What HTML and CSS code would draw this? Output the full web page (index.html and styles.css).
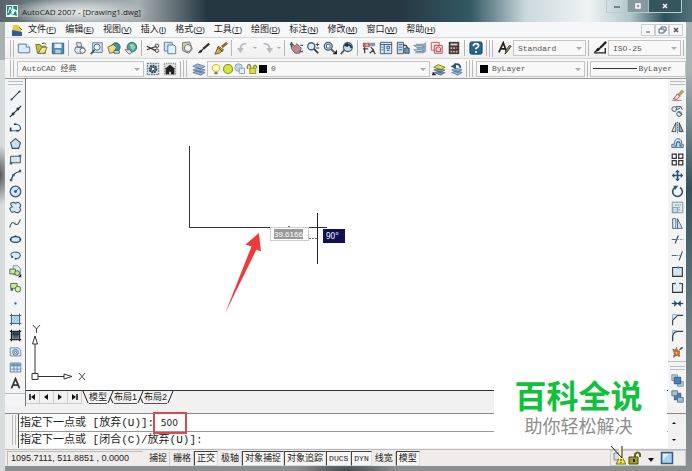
FILE: index.html
```html
<!DOCTYPE html>
<html lang="zh-CN">
<head>
<meta charset="utf-8">
<title>AutoCAD 2007 - [Drawing1.dwg]</title>
<link rel="stylesheet" href="styles.css">
</head>
<body>
<svg class="sprite" aria-hidden="true">
<symbol id="new" viewBox="0 0 16 16"><path d="M1.500 3.500h9l4 3.500v6.500h-13z" fill="#dcebf5" stroke="#4d7390"/><path d="M10.500 3.500v3.500h4" fill="#fff" stroke="#4d7390"/></symbol>
<symbol id="open" viewBox="0 0 16 16"><path d="M2 4h5l1 2h5v8H4z" fill="#c9bd45" stroke="#6d6a2c"/><path d="M5 14l4-7h6l-3 7z" fill="#f4e98a" stroke="#6d6a2c"/><path d="M9 3q3-2 5 1" fill="none" stroke="#333"/></symbol>
<symbol id="save" viewBox="0 0 16 16"><path d="M1.500 2.500h13v12h-13z" fill="#4f8fb9" stroke="#2c5878"/><path d="M4 3h8v5H4z" fill="#e6f1f7"/><path d="M5 10h6v4H5z" fill="#b5cfdf"/></symbol>
<symbol id="print" viewBox="0 0 16 16"><path d="M4 2h5l1 5H5zM3 7h9l2 4-3 3H4l-2-3z" fill="#e3e8ee" stroke="#536170"/><circle cx="11" cy="11" r="3" fill="#fff" stroke="#456"/></symbol>
<symbol id="preview" viewBox="0 0 16 16"><path d="M3 2h11v11H3z" fill="#d7e8f2" stroke="#54758b"/><circle cx="8" cy="7" r="3.500" fill="#eef8ff" stroke="#39566e"/><path d="M5 10l-4 5" stroke="#39566e" stroke-width="2"/></symbol>
<symbol id="publish" viewBox="0 0 16 16"><circle cx="10" cy="7" r="5" fill="#3e93a1" stroke="#285a67"/><path d="M1 7l6-3 4 3-3 6-5 1z" fill="#e9e084" stroke="#65653b"/><path d="M8 11h6v3H8z" fill="#dde6ed" stroke="#555"/></symbol>
<symbol id="globe" viewBox="0 0 16 16"><circle cx="9" cy="7" r="5.500" fill="#4a9fa9" stroke="#2e646f"/><path d="M6 4l4-1 3 4-3 4-2-3z" fill="#9dd39d"/><path d="M1 10h6l2 3-3 2z" fill="#dfe7ee" stroke="#567"/></symbol>
<symbol id="cut" viewBox="0 0 16 16"><path d="M1 6l10 5M1 10l11-4" stroke="#333" stroke-width="1.400"/><circle cx="12.500" cy="5.500" r="2" fill="none" stroke="#333"/><circle cx="12.500" cy="11" r="2" fill="none" stroke="#333"/></symbol>
<symbol id="copy" viewBox="0 0 16 16"><path d="M1.500 1.500h9v10h-9z" fill="#cfe3ef" stroke="#4d7894"/><path d="M5.500 4.500h7l2 2v8h-9z" fill="#e5f1f8" stroke="#4d7894"/></symbol>
<symbol id="paste" viewBox="0 0 16 16"><path d="M3 2l8-1 3 8-4 5-7-3z" fill="#d9d1aa" stroke="#666"/><circle cx="9" cy="8" r="4" fill="#eef2f4" stroke="#667"/></symbol>
<symbol id="brush" viewBox="0 0 16 16"><path d="M14 3L7 9" stroke="#333" stroke-width="2.500"/><path d="M8 8L5 13l-4 1 2-3z" fill="#222"/></symbol>
<symbol id="match" viewBox="0 0 16 16"><path d="M15 2L9 7" stroke="#8b6e32" stroke-width="3"/><path d="M5 6l6 4-5 4-5 1z" fill="#d3ad4b" stroke="#6c5420"/><path d="M4 7l6 5" stroke="#333"/></symbol>
<symbol id="undo" viewBox="0 0 16 16"><path d="M12 3Q5 3 5 9" fill="none" stroke="#b9bdc0" stroke-width="2"/><path d="M1 8h8l-4 6z" fill="#b9bdc0"/></symbol>
<symbol id="redo" viewBox="0 0 16 16"><path d="M4 3q7 0 7 6" fill="none" stroke="#b9bdc0" stroke-width="2"/><path d="M7 8h8l-4 6z" fill="#b9bdc0"/></symbol>
<symbol id="pan" viewBox="0 0 16 16"><path d="M2 2l5 4 2-3 5 5-2 6H7L3 9z" fill="#c08a8a" stroke="#79525a"/><path d="M1 4h4M3 1v6M12 12h4M13 5h3" stroke="#367" stroke-width="1.500"/></symbol>
<symbol id="zoom" viewBox="0 0 16 16"><circle cx="6" cy="6" r="4" fill="#dceefa" stroke="#40617c" stroke-width="1.500"/><path d="M9 9l5 5" stroke="#333" stroke-width="2"/><path d="M11 4h4M13 2v4M11 8h4" stroke="#333"/></symbol>
<symbol id="zoomwin" viewBox="0 0 16 16"><circle cx="6" cy="6" r="4.500" fill="#c6dff0" stroke="#40617c" stroke-width="1.500"/><path d="M4 4h4v4H4z" fill="#fff" stroke="#557"/><path d="M9 9l4 4" stroke="#456" stroke-width="2"/><path d="M11 15h5v-5z" fill="#222"/></symbol>
<symbol id="zoomprev" viewBox="0 0 16 16"><circle cx="9" cy="7" r="5" fill="#c6dff0" stroke="#40617c" stroke-width="1.500"/><path d="M5 10l-4 5" stroke="#456" stroke-width="2"/><path d="M13 8q-1-5-6-3" fill="none" stroke="#234" stroke-width="2"/><path d="M4 5l5-4v6z" fill="#234"/></symbol>
<symbol id="props" viewBox="0 0 16 16"><path d="M1 2h8v5H1z" fill="#be5574"/><path d="M9 2h6v4H9z" fill="#779db4"/><path d="M3 7v7M1 9h6M10 7l3 3-4 4M12 9l3 6" stroke="#444" stroke-width="1.500" fill="none"/><path d="M4 3h3v3H4z" fill="#e6bd53"/></symbol>
<symbol id="dc" viewBox="0 0 16 16"><path d="M1.500 1.500h13v13h-13z" fill="#d8e8f1" stroke="#33546c"/><path d="M1 4h14M6 4v10M3 7h2M3 10h2M9 6h3v3H9zM9 11h3" stroke="#33546c" fill="none"/></symbol>
<symbol id="palette" viewBox="0 0 16 16"><path d="M1.500 1.500h7v13h-7z" fill="#c9deeb" stroke="#33546c"/><path d="M3 4h4M3 7h4M3 10h4" stroke="#33546c"/><path d="M8 5q5-1 5 4" fill="none" stroke="#335" stroke-width="1.500"/><path d="M10 8h5v6h-5z" fill="#719ab8" stroke="#246"/></symbol>
<symbol id="sheet" viewBox="0 0 16 16"><path d="M3 3h9l3-2v11l-3 2H1l4-3z" fill="#91aab7"/><path d="M1 5h9l3 2H4zM1 10h9l3 2H4z" fill="#d8e7ed" stroke="#6e8997"/></symbol>
<symbol id="markup" viewBox="0 0 16 16"><path d="M1.500 1.500h9v9h-9z" fill="#f7dfe1" stroke="#be4f59"/><path d="M5 5h9v9H5z" fill="#f4d6d9" stroke="#b64550"/><path d="M7 8q3-3 5 0v4H7z" fill="none" stroke="#b64550"/></symbol>
<symbol id="calc" viewBox="0 0 16 16"><path d="M2 1h12v14H2z" fill="#443939"/><path d="M4 3h8v2H4z" fill="#ddd"/><path d="M4 7h2v2H4zM7 7h2v2H7zM4 11h2v2H4zM7 11h2v2H7zM10 11h2v2h-2z" fill="#c9b3ac"/><path d="M10 7h2v2h-2z" fill="#d44"/></symbol>
<symbol id="help" viewBox="0 0 16 16"><rect x="1" y="1" width="14" height="14" rx="2" fill="#286486" stroke="#183f58"/><path d="M5 6q0-3 3-3t3 2.500q0 1.500-3 3v1" stroke="#fff" stroke-width="2" fill="none"/><circle cx="8" cy="12.500" r="1.200" fill="#fff"/></symbol>
<symbol id="tstyle" viewBox="0 0 16 16"><path d="M1 13L6 2l4 11M3 9h6" fill="none" stroke="#222" stroke-width="2"/><path d="M15 6l-5 7-2 2 1-4 4-6z" fill="#a29366" stroke="#333"/></symbol>
<symbol id="dstyle" viewBox="0 0 16 16"><path d="M15 1L8 8" stroke="#222" stroke-width="2.500"/><path d="M9 7l-2 4-6 2 4-5z" fill="#222"/><path d="M1 13.500h14M14 8v6" stroke="#222" stroke-width="1.500"/></symbol>
<symbol id="gear" viewBox="0 0 16 16"><path d="M1.500 1.500h13v13h-13z" fill="#d4e0e8" stroke="#435766" stroke-dasharray="2 1"/><circle cx="8" cy="8" r="4" fill="#7193a9" stroke="#2c4659" stroke-width="2" stroke-dasharray="2 1"/><circle cx="8" cy="8" r="2" fill="#fff" stroke="#2c4659"/></symbol>
<symbol id="home" viewBox="0 0 16 16"><path d="M1.500 1.500h13v13h-13z" fill="#ddd" stroke="#666" stroke-dasharray="1 1"/><path d="M2 8l6-5 6 5h-1v6H9v-3H7v3H3V8z" fill="#222"/></symbol>
<symbol id="layers" viewBox="0 0 16 16"><path d="M1 9l5-2 9 2-5 3zM1 12l5-2 9 2-5 3zM1 5l5-3 9 3-5 3z" fill="#91b2ce" stroke="#426480" stroke-width=".7"/></symbol>
<symbol id="bulb" viewBox="0 0 16 16"><path d="M5 11q-3-3-2-6 1-3 5-3t5 3q1 3-2 6z" fill="#ffffa5" stroke="#a6a32a"/><path d="M6 12h4v3H6z" fill="#777"/></symbol>
<symbol id="sun" viewBox="0 0 16 16"><circle cx="8" cy="8" r="6" fill="#d7e534" stroke="#838e24" stroke-width="1.500"/></symbol>
<symbol id="vpfreeze" viewBox="0 0 16 16"><circle cx="6" cy="6" r="5" fill="#c5d6df" stroke="#7893a1"/><path d="M7 7h7v7H7z" fill="#e5edf2" stroke="#7893a1"/></symbol>
<symbol id="unlock" viewBox="0 0 16 16"><path d="M2 8V4q2-4 4 0v4M10 8V5q2-4 4 0v2" fill="none" stroke="#8b931b" stroke-width="2"/><path d="M5 7h8v7H5z" fill="#dfe233" stroke="#777b1d"/></symbol>
<symbol id="laycur" viewBox="0 0 16 16"><path d="M2 6l5-3 8 3-5 3z" fill="#e0d947" stroke="#7b7d2a"/><path d="M2 9l5-1 8 1-5 3zM2 12l5-1 8 1-5 3z" fill="#7792a7" stroke="#455f74" stroke-width=".7"/><path d="M0 15h5l-4-4z" fill="#222"/></symbol>
<symbol id="layprev" viewBox="0 0 16 16"><path d="M3 9l5-2 7 2-5 3zM3 12l5-2 7 2-5 3z" fill="#91b2ce" stroke="#426480" stroke-width=".7"/><path d="M13 7q0-6-7-4" fill="none" stroke="#2c5275" stroke-width="2"/><path d="M2 5l6-4v7z" fill="#2c5275"/></symbol>
<symbol id="line" viewBox="0 0 16 16"><path d="M3 13L13 3" stroke="#444" stroke-width="1.300"/><circle cx="3" cy="13" r="1.300" fill="#247"/><circle cx="13" cy="3" r="1.300" fill="#247"/></symbol>
<symbol id="xline" viewBox="0 0 16 16"><path d="M1 15L15 1" stroke="#333" stroke-width="1.500"/><circle cx="5" cy="11" r="1.800" fill="#234"/><circle cx="11" cy="5" r="1.800" fill="#234"/></symbol>
<symbol id="pline" viewBox="0 0 16 16"><path d="M2 12h9q4-1 3-4-1-4-6-4" fill="none" stroke="#346b91" stroke-width="1.500"/><path d="M1 8h2v5H1zM9 11h3v2H9zM6 3h3v2H6z" fill="#234"/></symbol>
<symbol id="polygon" viewBox="0 0 16 16"><path d="M8 2l6 5-2 7H4L2 7z" fill="#cde1ed" stroke="#34485a" stroke-width="1.300"/></symbol>
<symbol id="rect" viewBox="0 0 16 16"><path d="M2 4h12v8H2z" fill="#d5e5ee" stroke="#333"/><path d="M1 11h3v3H1zM12 2h3v3h-3z" fill="#2a6389"/></symbol>
<symbol id="arc" viewBox="0 0 16 16"><path d="M3 14Q4 4 14 3" fill="none" stroke="#333" stroke-width="1.300"/><path d="M1 12h3v3H1zM4 6h3v3H4zM12 1h3v3h-3z" fill="#2a6389"/></symbol>
<symbol id="circle" viewBox="0 0 16 16"><circle cx="8" cy="8" r="6.500" fill="#d4e6f0" stroke="#345875" stroke-width="1.500"/><path d="M8 8l4-4" stroke="#345"/><circle cx="8" cy="8" r="1.800" fill="#2a6389"/></symbol>
<symbol id="cloud" viewBox="0 0 16 16"><path d="M4 7Q0 3 4 2q2-1 4 1 4-3 6 1 1 3-1 4 3 3-1 6-3 1-5-1-5 2-5-2-3-2 2-4z" fill="#d8e8ef" stroke="#405a6c" stroke-width="1.300"/></symbol>
<symbol id="spline" viewBox="0 0 16 16"><path d="M1 13q2-9 6-5t7-5" fill="none" stroke="#555" stroke-width="1.400"/></symbol>
<symbol id="ellipse" viewBox="0 0 16 16"><ellipse cx="8" cy="8" rx="6" ry="3.500" fill="#d8e8ef" stroke="#244c70" stroke-width="1.500"/><path d="M1 7h2v2H1zM13 7h2v2h-2zM7 3h2v2H7z" fill="#235"/></symbol>
<symbol id="earc" viewBox="0 0 16 16"><path d="M4 10Q0 5 6 4q8-1 8 4-1 4-6 4" fill="#d8e8ef" stroke="#456b87" stroke-width="1.300"/><path d="M3 9h2v2H3zM7 11h2v2H7z" fill="#247"/></symbol>
<symbol id="insblk" viewBox="0 0 16 16"><path d="M5 1h6l3 3v8H5z" fill="#d9ebf4" stroke="#69879a"/><path d="M1 5h7v6H1z" fill="#cde79d" stroke="#415c28"/><circle cx="10" cy="10" r="3" fill="#c1df98" stroke="#415c28"/><path d="M11 15h4v-4z" fill="#111"/></symbol>
<symbol id="mkblk" viewBox="0 0 16 16"><path d="M2 3h8v6H2z" fill="#cde79d" stroke="#415c28"/><circle cx="11" cy="10" r="3.500" fill="#d9eebc" stroke="#415c28"/><path d="M2 9h3v3H2z" fill="#367"/></symbol>
<symbol id="point" viewBox="0 0 16 16"><circle cx="8" cy="8" r="1.400" fill="#255d8c"/></symbol>
<symbol id="hatch" viewBox="0 0 16 16"><path d="M3 1v14M13 1v14M1 3h14M1 13h14" stroke="#326789" stroke-width="1.300"/><path d="M4 4h8v8H4z" fill="#bad6e5"/><path d="M4 8l4-4M4 12l8-8M8 12l4-4" stroke="#8fb4ca"/></symbol>
<symbol id="gradient" viewBox="0 0 16 16"><path d="M3 1v14M13 1v14M1 3h14M1 13h14" stroke="#222" stroke-width="1.500"/><path d="M4 4h8v8H4z" fill="#466573"/><path d="M4 4h8v4H4z" fill="#263d49"/></symbol>
<symbol id="region" viewBox="0 0 16 16"><path d="M1.500 3.500h10l3 3v7h-13z" fill="#d8e8ef" stroke="#607f98"/><circle cx="8" cy="9" r="3.500" fill="#c1d7e7" stroke="#426a89"/><circle cx="8" cy="9" r="1.300" fill="#fff" stroke="#426a89"/></symbol>
<symbol id="table" viewBox="0 0 16 16"><path d="M1.500 2.500h13v11h-13z" fill="#e2edf6" stroke="#477096"/><path d="M2 3h12v3H2z" fill="#7c9fc0"/><path d="M2 6h12M2 10h12M6 3v10M10 3v10" stroke="#5e83a5"/></symbol>
<symbol id="mtext" viewBox="0 0 16 16"><path d="M3 14L8 2l5 12M4.500 10h7" fill="none" stroke="#333" stroke-width="2"/></symbol>
<symbol id="erase" viewBox="0 0 16 16"><path d="M15 2L8 9" stroke="#b79d61" stroke-width="4"/><path d="M8 6l3 3-4 4-4-1z" fill="#f0d8dc" stroke="#77444d"/><path d="M1 14h12" stroke="#b55"/></symbol>
<symbol id="cpy" viewBox="0 0 16 16"><circle cx="4" cy="5" r="3" fill="#dbe8ef" stroke="#445"/><circle cx="10" cy="11" r="3" fill="#dbe8ef" stroke="#445"/><path d="M6 2h6l2 4M6 6l5-2M9 8l5 4" fill="none" stroke="#456a82" stroke-width="1.300"/></symbol>
<symbol id="mirror" viewBox="0 0 16 16"><path d="M6 2v11H1z" fill="#d6e2e9" stroke="#333"/><path d="M10 2v11h5z" fill="#7faccc" stroke="#333"/><path d="M8 1v14" stroke="#357" stroke-dasharray="2 1"/></symbol>
<symbol id="offset" viewBox="0 0 16 16"><path d="M1 13V9h3q0-7 5-7 5 1 4 7h2v4z" fill="#cce1ed" stroke="#375c75"/><path d="M3 11h4q-1-5 2-5t2 5h3" fill="none" stroke="#375c75" stroke-width="1.300"/></symbol>
<symbol id="array" viewBox="0 0 16 16"><path d="M1.500 1.500h5v5h-5zM9.500 1.500h5v5h-5zM1.500 9.500h5v5h-5zM9.500 9.500h5v5h-5z" fill="#fff" stroke="#333" stroke-width="1.500"/></symbol>
<symbol id="move" viewBox="0 0 16 16"><path d="M8 2v12M2 8h12" stroke="#295273" stroke-width="2"/><path d="M5 4l3-3 3 3zM5 12l3 3 3-3zM4 5L1 8l3 3zM12 5l3 3-3 3z" fill="#295273"/></symbol>
<symbol id="rotate" viewBox="0 0 16 16"><path d="M5 3a6 6 0 1 0 6 0" fill="none" stroke="#31536c" stroke-width="2"/><path d="M3 1h6L5 6z" fill="#31536c"/></symbol>
<symbol id="scale" viewBox="0 0 16 16"><path d="M1.500 1.500h13v13h-13z" fill="#dceaf2" stroke="#6c8798"/><path d="M2 8h6v6H2z" fill="#c5d9e5" stroke="#7894a6"/><path d="M5 5h7M10 7v6" fill="none" stroke="#678" stroke-dasharray="2 1"/></symbol>
<symbol id="stretch" viewBox="0 0 16 16"><path d="M2 2h4v12H2z" fill="#d8e8ef" stroke="#456"/><path d="M8 2l6 12H6" fill="#d3e1ea" stroke="#375970"/><path d="M8 2v12" stroke="#375970"/></symbol>
<symbol id="trim" viewBox="0 0 16 16"><path d="M9 3L5 13" stroke="#345" stroke-width="1.300"/><path d="M1 8h5" stroke="#345"/><path d="M8 8h7" stroke="#578aaa" stroke-dasharray="2 1"/></symbol>
<symbol id="extend" viewBox="0 0 16 16"><path d="M14 3l-4 11" stroke="#345" stroke-width="1.300"/><path d="M1 8h6" stroke="#345"/><path d="M7 8h5" stroke="#578aaa" stroke-dasharray="2 1"/></symbol>
<symbol id="breakpt" viewBox="0 0 16 16"><path d="M2 3h12v11H2z" fill="#d4e5ef" stroke="#333" stroke-width="1.300"/><circle cx="9" cy="3" r="1.500" fill="#458cb6"/></symbol>
<symbol id="break" viewBox="0 0 16 16"><path d="M5 3H2v11h12V3h-3" fill="#e5eef4" stroke="#333" stroke-width="1.300"/><path d="M4 2h2v2H4zM10 2h2v2h-2z" fill="#376989"/></symbol>
<symbol id="join" viewBox="0 0 16 16"><path d="M1 8h14" stroke="#254966" stroke-width="1.500"/><path d="M4 4l4 4-4 4zM12 4L8 8l4 4z" fill="#254966"/></symbol>
<symbol id="chamfer" viewBox="0 0 16 16"><path d="M2 15V9l6-6h7" fill="none" stroke="#345" stroke-width="1.400"/><path d="M2 8V2h5" fill="none" stroke="#6ea3c1"/></symbol>
<symbol id="fillet" viewBox="0 0 16 16"><path d="M2 15V9q1-6 7-6h6" fill="none" stroke="#345" stroke-width="1.600"/><path d="M2 7V2h5" fill="none" stroke="#6ea3c1"/></symbol>
<symbol id="explode" viewBox="0 0 16 16"><path d="M2 5l3 1 2-3 1 4 3 1-1 3 1 3-4-1-4 2 1-5z" fill="#c46a32" stroke="#8c5330" stroke-dasharray="2 1"/><path d="M5 8l3 1-1 3z" fill="#f6d35c"/><path d="M9 7l3-4 3-1-1 3z" fill="#555"/></symbol>
<symbol id="front" viewBox="0 0 16 16"><path d="M1 1h7v7H1zM8 9h7v6H8z" fill="#b9cad6" stroke="#738b9b"/><path d="M4 4h8v8H4z" fill="#4b80b4" stroke="#28527b"/></symbol>
<symbol id="back" viewBox="0 0 16 16"><path d="M4 4h8v8H4z" fill="#4b80b4" stroke="#28527b"/><path d="M1 1h7v6H1zM8 9h7v6H8z" fill="#a7bfd0" stroke="#4c6b80"/></symbol>
</svg>

<header class="titlebar">
  <svg class="logo" viewBox="0 0 12 12" aria-hidden="true"><path d="M0 0h12v12H0z" fill="#e1f5f1"/><path d="M1 1h5v6l-3 3H1zM7 1h4v4H8zM5 9l5-3 1 5z" fill="#21877d"/><path d="M2 8l2-6 3 7 2-5" fill="none" stroke="#fff"/></svg>
  <h1>AutoCAD 2007 - [Drawing1.dwg]</h1>
  <div class="wincontrols">
    <button aria-label="最小化"><svg viewBox="0 0 10 8"><path d="M2 5h6" stroke="#71828b" stroke-width="2"/></svg></button>
    <button class="max" aria-label="最大化"><svg viewBox="0 0 10 8"><path d="M3 2h4v4H3z" fill="none" stroke="#fff" stroke-width="1.500"/></svg></button>
    <button class="close" aria-label="关闭"><svg viewBox="0 0 10 8"><path d="M3 2l4 4M7 2L3 6" stroke="#fff" stroke-width="1.500"/></svg></button>
  </div>
</header>

<div class="window">
  <nav class="menubar">
    <svg class="docicon" viewBox="0 0 12 12" aria-hidden="true"><path d="M2 1h5l3 4v4H1z" fill="#e8c84c"/><path d="M1 6l10 2v4H1z" fill="#315c9b"/><path d="M8 3l3 3" stroke="#765f24"/></svg>
    <button>文件<span>(<u>F</u>)</span></button>
    <button>编辑<span>(<u>E</u>)</span></button>
    <button>视图<span>(<u>V</u>)</span></button>
    <button>插入<span>(<u>I</u>)</span></button>
    <button>格式<span>(<u>O</u>)</span></button>
    <button>工具<span>(<u>T</u>)</span></button>
    <button>绘图<span>(<u>D</u>)</span></button>
    <button>标注<span>(<u>N</u>)</span></button>
    <button>修改<span>(<u>M</u>)</span></button>
    <button>窗口<span>(<u>W</u>)</span></button>
    <button>帮助<span>(<u>H</u>)</span></button>
    <div class="doccontrols">
      <button aria-label="最小化文档"><svg viewBox="0 0 12 10"><path d="M4 7h4" stroke="#555"/></svg></button>
      <button aria-label="还原文档"><svg viewBox="0 0 12 10"><path d="M5 4V2h5v4H8M3 4h5v4H3z" fill="none" stroke="#567"/></svg></button>
      <button aria-label="关闭文档"><svg viewBox="0 0 12 10"><path d="M4 3l4 4M8 3L4 7" stroke="#555" stroke-width="1.500"/></svg></button>
    </div>
  </nav>

  <div class="toolbar">
    <i class="grip"></i>
    <div class="group main">
      <button aria-label="新建"><svg><use href="#new"/></svg></button><button aria-label="打开"><svg><use href="#open"/></svg></button><button aria-label="保存"><svg><use href="#save"/></svg></button>
      <i class="sep"></i>
      <button aria-label="打印"><svg><use href="#print"/></svg></button><button aria-label="打印预览"><svg><use href="#preview"/></svg></button><button aria-label="发布"><svg><use href="#publish"/></svg></button><button aria-label="三维DWF"><svg><use href="#globe"/></svg></button>
      <i class="sep"></i>
      <button aria-label="剪切"><svg><use href="#cut"/></svg></button><button aria-label="复制到剪贴板"><svg><use href="#copy"/></svg></button><button aria-label="粘贴"><svg><use href="#paste"/></svg></button><button aria-label="特性匹配"><svg><use href="#brush"/></svg></button><button aria-label="块编辑器"><svg><use href="#match"/></svg></button>
      <i class="sep"></i>
      <button class="drop" aria-label="放弃"><svg><use href="#undo"/></svg></button><button class="drop" aria-label="重做"><svg><use href="#redo"/></svg></button>
      <i class="sep"></i>
      <button aria-label="实时平移"><svg><use href="#pan"/></svg></button><button aria-label="实时缩放"><svg><use href="#zoom"/></svg></button><button aria-label="窗口缩放"><svg><use href="#zoomwin"/></svg></button><button aria-label="缩放上一个"><svg><use href="#zoomprev"/></svg></button>
      <i class="sep"></i>
      <button aria-label="特性"><svg><use href="#props"/></svg></button><button aria-label="设计中心"><svg><use href="#dc"/></svg></button><button aria-label="工具选项板"><svg><use href="#palette"/></svg></button><button aria-label="图纸集"><svg><use href="#sheet"/></svg></button><button aria-label="标记集"><svg><use href="#markup"/></svg></button><button aria-label="计算器"><svg><use href="#calc"/></svg></button>
      <i class="sep"></i>
      <button aria-label="帮助"><svg><use href="#help"/></svg></button>
    </div>
    <i class="sep"></i><i class="grip"></i>
    <div class="group styles">
      <button aria-label="文字样式"><svg><use href="#tstyle"/></svg></button>
      <label class="combo"><select aria-label="文字样式列表"><option>Standard</option></select></label>
      <i class="sep"></i>
      <button aria-label="标注样式"><svg><use href="#dstyle"/></svg></button>
      <label class="combo"><select aria-label="标注样式列表"><option>ISO-25</option></select></label>
      <i class="sep"></i>
    </div>
  </div>

  <div class="toolbar">
    <i class="grip"></i>
    <label class="combo workspace"><select aria-label="工作空间"><option>AutoCAD 经典</option></select></label>
    <button aria-label="工作空间设置"><svg><use href="#gear"/></svg></button><button aria-label="我的工作空间"><svg><use href="#home"/></svg></button>
    <i class="sep"></i><i class="grip"></i>
    <button aria-label="图层特性"><svg><use href="#layers"/></svg></button>
    <label class="combo layer">
      <svg><use href="#bulb"/></svg><svg><use href="#sun"/></svg><svg><use href="#vpfreeze"/></svg><svg><use href="#unlock"/></svg><i class="swatch"></i>
      <select aria-label="图层"><option>0</option></select>
    </label>
    <button aria-label="置为当前图层"><svg><use href="#laycur"/></svg></button><button aria-label="上一个图层"><svg><use href="#layprev"/></svg></button>
    <i class="sep"></i><i class="grip"></i>
    <label class="combo color"><i class="swatch"></i><select aria-label="颜色"><option>ByLayer</option></select></label>
    <i class="sep"></i>
    <label class="combo ltype"><i class="stroke"></i><select aria-label="线型"><option>ByLayer</option></select></label>
  </div>

  <main class="work">
    <div class="side">
      <i class="hgrip"></i>
      <button aria-label="直线"><svg><use href="#line"/></svg></button><button aria-label="构造线"><svg><use href="#xline"/></svg></button><button aria-label="多段线"><svg><use href="#pline"/></svg></button><button aria-label="正多边形"><svg><use href="#polygon"/></svg></button><button aria-label="矩形"><svg><use href="#rect"/></svg></button><button aria-label="圆弧"><svg><use href="#arc"/></svg></button><button aria-label="圆"><svg><use href="#circle"/></svg></button><button aria-label="修订云线"><svg><use href="#cloud"/></svg></button><button aria-label="样条曲线"><svg><use href="#spline"/></svg></button><button aria-label="椭圆"><svg><use href="#ellipse"/></svg></button><button aria-label="椭圆弧"><svg><use href="#earc"/></svg></button><button aria-label="插入块"><svg><use href="#insblk"/></svg></button><button aria-label="创建块"><svg><use href="#mkblk"/></svg></button><button aria-label="点"><svg><use href="#point"/></svg></button><button aria-label="图案填充"><svg><use href="#hatch"/></svg></button><button aria-label="渐变色"><svg><use href="#gradient"/></svg></button><button aria-label="面域"><svg><use href="#region"/></svg></button><button aria-label="表格"><svg><use href="#table"/></svg></button><button aria-label="多行文字"><svg><use href="#mtext"/></svg></button>
      <i class="hsep"></i>
    </div>
    <div class="document">
      <div class="canvas">
        <svg class="drawing" viewBox="0 0 330 250" aria-hidden="true">
          <path d="M163.500 67v81.500H301" fill="none" stroke="#333"/>
          <path d="M291.500 134v51" stroke="#222"/>
          <path d="M283 159.500h9M262 147.500h3" stroke="#777" stroke-dasharray="2 1"/>
          <path d="M233 154L219.500 165.500l6 2L199 234.500l31.500-64 4.500 2z" fill="#ee3a39"/>
        </svg>
        <input class="dyninput" aria-label="动态输入" value="39.6166">
        <output class="angle">90°</output>
        <svg class="ucs" viewBox="0 0 64 60" aria-hidden="true">
          <path d="M4 49.500h6v6H4zM7 49V17M10 52.500h34" fill="#fff" stroke="#333"/>
          <path d="M4.500 20L7 12l2.500 8zM36 50l8 2.500-8 2.500z" fill="#fff" stroke="#333"/>
          <path d="M5 1l3.500 4L12 1M8.500 5v4M51 49l6 7M57 49l-6 7" fill="none" stroke="#444"/>
        </svg>
      </div>
      <div class="tabs">
        <button class="nav" aria-label="第一个"><svg viewBox="0 0 12 12"><path d="M4 3v6" stroke="#111" stroke-width="1.500"/><path d="M9 3v6L5 6z"/></svg></button>
        <button class="nav" aria-label="上一个"><svg viewBox="0 0 12 12"><path d="M8 3v6L4 6z"/></svg></button>
        <button class="nav" aria-label="下一个"><svg viewBox="0 0 12 12"><path d="M4 3v6l4-3z"/></svg></button>
        <button class="nav" aria-label="最后一个"><svg viewBox="0 0 12 12"><path d="M9 3v6" stroke="#111" stroke-width="1.500"/><path d="M4 3v6l4-3z"/></svg></button>
        <svg class="slash" viewBox="0 0 7 13"><path d="M1 0l5 12" stroke="#222"/></svg>
        <button class="tab active">模型</button>
        <svg class="slash" viewBox="0 0 7 13"><path d="M6 0L1 12M3 6l3 6" stroke="#222"/></svg>
        <button class="tab">布局1</button>
        <svg class="slash" viewBox="0 0 7 13"><path d="M6 0L1 12M3 6l3 6" stroke="#222"/></svg>
        <button class="tab">布局2</button>
        <svg class="slash" viewBox="0 0 7 13"><path d="M6 0L1 12" stroke="#222"/></svg>
      </div>
    </div>
    <div class="side right">
      <i class="hgrip"></i>
      <button aria-label="删除"><svg><use href="#erase"/></svg></button><button aria-label="复制"><svg><use href="#cpy"/></svg></button><button aria-label="镜像"><svg><use href="#mirror"/></svg></button><button aria-label="偏移"><svg><use href="#offset"/></svg></button><button aria-label="阵列"><svg><use href="#array"/></svg></button><button aria-label="移动"><svg><use href="#move"/></svg></button><button aria-label="旋转"><svg><use href="#rotate"/></svg></button><button aria-label="缩放"><svg><use href="#scale"/></svg></button><button aria-label="拉伸"><svg><use href="#stretch"/></svg></button><button aria-label="修剪"><svg><use href="#trim"/></svg></button><button aria-label="延伸"><svg><use href="#extend"/></svg></button><button aria-label="打断于点"><svg><use href="#breakpt"/></svg></button><button aria-label="打断"><svg><use href="#break"/></svg></button><button aria-label="合并"><svg><use href="#join"/></svg></button><button aria-label="倒角"><svg><use href="#chamfer"/></svg></button><button aria-label="圆角"><svg><use href="#fillet"/></svg></button><button aria-label="分解"><svg><use href="#explode"/></svg></button>
      <i class="hsep"></i><i class="hgrip"></i>
      <button aria-label="前置"><svg><use href="#front"/></svg></button><button aria-label="后置"><svg><use href="#back"/></svg></button>
    </div>
  </main>

  <section class="command">
    <i class="grip"></i>
    <div class="lines">
      <p>指定下一点或 [放弃(U)]: <span class="value">500</span></p>
      <p><label for="cmd">指定下一点或 [闭合(C)/放弃(U)]:</label><input id="cmd"></p>
    </div>
    <div class="scroll">
      <button aria-label="向上滚动"><svg viewBox="0 0 8 8"><path d="M2 5h4L4 3z"/></svg></button>
      <button aria-label="向下滚动"><svg viewBox="0 0 8 8"><path d="M2 3h4L4 5z"/></svg></button>
    </div>
  </section>

  <footer class="status">
    <output class="coords">1095.7111, 511.8851 , 0.0000</output>
    <button>捕捉</button><button>栅格</button><button class="on">正交</button><button>极轴</button><button class="on">对象捕捉</button><button class="on">对象追踪</button><button class="on mono">DUCS</button><button class="on mono">DYN</button><button>线宽</button><button class="on">模型</button>
    <div class="tray">
      <svg viewBox="0 0 14 14" aria-hidden="true"><path d="M2 2h6v7H2z" fill="#ddd" stroke="#888"/><path d="M9 4l5 9H4z" fill="#f4e532" stroke="#777225"/><path d="M9 7v3M9 11v1" stroke="#222"/></svg>
      <svg viewBox="0 0 14 14" aria-hidden="true"><path d="M7 6V3q3-3 5 0v3" fill="none" stroke="#66621b" stroke-width="2"/><path d="M1 6h9v7H1z" fill="#a29c20" stroke="#4d4b12"/><path d="M5 8h2v3H5z" fill="#222"/></svg>
      <button aria-label="状态栏菜单"><svg viewBox="0 0 14 14"><path d="M4 7h6l-3 4z"/></svg></button>
      <button aria-label="清除屏幕"><svg viewBox="0 0 14 14"><path d="M1.500 1.500h11v11h-11z" fill="#a9d0e8" stroke="#345e80" stroke-width="1.500"/><path d="M3 3h6L3 9z" fill="#def0fa"/></svg></button>
    </div>
  </footer>

  <aside class="watermark">
    <strong>百科全说</strong>
    <span>助你轻松解决</span>
  </aside>
  <svg class="pointer" viewBox="0 0 14 14" aria-hidden="true"><path d="M9 1h4v12H9z" fill="#f5f4c3"/><path d="M1 0l11 12V0" fill="none" stroke="#222"/></svg>
</div>
</body>
</html>
```
FILE: styles.css
```css
* { box-sizing: border-box; }

body {
  margin: 0;
  min-height: 100vh;
  display: flex;
  flex-direction: column;
  padding: 0 6px 5px 5px;
  font-family: "Liberation Sans", "Noto Sans CJK SC", sans-serif;
  font-size: 9px;
  color: #222;
  background:
    radial-gradient(ellipse 12px 30px at 0 175px, #55585c, transparent),
    radial-gradient(ellipse 50px 14px at 50% 100%, #3e4a50, transparent),
    linear-gradient(90deg, #d9dcdd 0, #d9dcdd 5px, transparent 5px) 0 60px no-repeat,
    linear-gradient(#a9b1b3 0, #a9b1b3 15%, #35515a 40%, #6e7d82 70%, #8b8f90 100%);
}

button {
  margin: 0;
  padding: 0;
  border: 0;
  background: none;
  font: inherit;
  color: inherit;
}

svg { display: block; fill: #111; }
.sprite { position: absolute; width: 0; height: 0; }

.titlebar {
  display: flex;
  align-items: center;
  height: 22px;
  margin: 0 -6px 0 -5px;
  padding: 0 10px 0 6px;
  gap: 4px;
  background:
    radial-gradient(ellipse 72px 15px at 78px 12px, #e3e8e9, #c5cdcfcc 55%, transparent),
    linear-gradient(90deg, #59656b, #a6afb2 20%, #24363f 30%, #263943 58%, #335962 68%, #cbd9dc 76%, #eff3f4 85%, #b4c7cb 91%, #2c5259 96%, #537178);
}
.titlebar h1 { flex: 1; margin: 0; font: 8px "Open Sans", "Noto Sans", sans-serif; }
.logo { width: 12px; height: 12px; }
.wincontrols { display: flex; align-self: flex-start; border: 1px solid #b9cbd0; border-top: 0; }
.wincontrols button { width: 21px; height: 12px; display: grid; place-items: center; border-right: 1px solid #a8babf; }
.wincontrols svg { width: 10px; height: 8px; }
.wincontrols .max { background: #86999f; }
.wincontrols .close { width: 32px; border: 0; background: #35565d; }

.window {
  position: relative;
  flex: 1;
  display: flex;
  flex-direction: column;
  background: #f1f1f1;
}

.menubar { display: flex; align-items: center; height: 15px; padding-left: 6px; gap: 9px; background: #f6f7f8; line-height: 13px; }
.menubar > button { white-space: nowrap; }
.menubar span { font-size: 8px; }
.docicon { width: 12px; height: 12px; margin-right: -4px; }
.doccontrols { display: flex; margin-left: auto; padding-right: 3px; }
.doccontrols button { width: 14px; height: 12px; border: 1px solid #ccc; }
.doccontrols svg { width: 12px; height: 10px; }

.toolbar {
  display: flex;
  align-items: center;
  height: 21px;
  padding-left: 5px;
  border-top: 1px solid #d5d5d5;
  background: linear-gradient(#fafafa, #f0f0f0);
}
.toolbar + .toolbar { height: 20px; }
.toolbar button, .side button { flex: none; width: 17px; height: 16px; display: grid; place-items: center; }
.toolbar button svg { width: 14px; height: 14px; }
.group { display: flex; align-items: center; }
.main { margin-left: -2px; }
.styles { flex: 1; }
.drop { position: relative; }
.toolbar .drop { width: 24px; padding-right: 7px; }
.drop::after { content: ""; position: absolute; right: 1px; top: 7px; border: 2px solid transparent; border-top-color: #aaa; }
.grip { flex: none; width: 4px; height: 17px; margin: 0 3px 0 0; border: solid #bbb; border-width: 0 1px; }
.sep { flex: none; width: 1px; height: 16px; margin: 0 2px; background: #b5b5b5; }

.combo {
  position: relative;
  display: flex;
  align-items: center;
  flex: 1;
  min-width: 0;
  height: 16px;
  padding-left: 2px;
  border: 1px solid #c4c4c4;
  background: #f8f8f8;
}
.combo select {
  appearance: none;
  flex: 1;
  min-width: 0;
  height: 14px;
  padding: 0 2px;
  border: 0;
  background: none;
  color: #555;
  font: 8px "Liberation Mono", "Noto Sans CJK SC", monospace;
}
.combo::after { content: ""; position: absolute; right: 3px; top: 6px; border: 3px solid transparent; border-top-color: #aaa; }
.combo svg { flex: none; width: 12px; height: 12px; }
.workspace { flex: 0 1 127px; }
.layer { flex: 2 1 206px; }
.color { flex: 1 1 100px; }
.ltype { flex: 1 1 88px; }
.ltype::after { display: none; }
.swatch { flex: none; width: 8px; height: 8px; margin: 0 2px 0 1px; background: #000; }
.stroke { flex: none; width: 44px; height: 1px; background: #333; }

.work { flex: 1; display: flex; border-top: 1px solid #999; }
.side { width: 20px; display: flex; flex-direction: column; align-items: center; background: #f3f4f6; }
.side svg { width: 13px; height: 13px; }
.right { width: 18px; }
.hgrip { flex: none; width: 15px; height: 4px; margin: 2px 0; border: solid #bbb; border-width: 1px 0; }
.hsep { width: 100%; height: 1px; margin: 2px 0; background: #bbb; }
.document { flex: 1; min-width: 0; display: flex; flex-direction: column; border: solid #777; border-width: 0 0 0 1px; background: #f1f1f1; }
.canvas { position: relative; flex: 1; background: #fff; border-bottom: 1px solid #333; }
.drawing { position: absolute; left: 0; top: 0; width: 330px; height: 250px; }
.ucs { position: absolute; left: 2px; bottom: 6px; width: 64px; height: 60px; }
.dyninput {
  position: absolute;
  left: 244px;
  top: 148px;
  width: 39px;
  height: 14px;
  padding: 0 3px;
  border: 1px solid #ccc;
  font: 8px "Liberation Sans", sans-serif;
  color: #fff;
  background: linear-gradient(#999, #999) 3px 1px / 29px 10px no-repeat #fff;
}
.angle { position: absolute; left: 297px; top: 150px; width: 22px; padding-left: 3px; font: 8px/14px "Noto Sans", sans-serif; color: #fff; background: #101052; }

.tabs { display: flex; height: 13px; margin-bottom: 2px; line-height: 12px; }
.nav { width: 14px; border: solid #ccc; border-width: 0 1px 1px 0; }
.nav svg { width: 12px; height: 12px; }
.slash { width: 7px; height: 13px; fill: none; }
.tab { border-bottom: 1px solid #555; }
.active { background: #fff; }

.command { display: flex; margin-top: 7px; padding: 0 0 1px 5px; border-top: 1px solid #888; background: #f1f1f1; }
.command > .grip { height: 30px; margin: 1px 2px 0; }
.lines { flex: 1; border-left: 1px solid #555; background: #fff; }
.lines p { display: flex; align-items: center; height: 17px; margin: 0; padding-left: 1px; white-space: pre; font: 11px/16px "Liberation Mono", "Noto Sans CJK SC", monospace; }
.lines p + p { border-top: 1px solid #999; }
.lines input { flex: 1; min-width: 0; height: 14px; padding: 0; border: 0; outline: 0; font: inherit; }
.value { position: relative; font: 9px "DejaVu Sans", sans-serif; }
.value::after { content: ""; position: absolute; inset: -6px -9px -6px -8px; border: 2px solid #d94a4a; }
.scroll { width: 18px; display: flex; flex-direction: column; }
.scroll button { flex: 1; display: grid; place-items: center; width: 12px; }
.scroll svg { width: 8px; height: 8px; }

.status { display: flex; align-items: center; height: 17px; padding-left: 2px; border-top: 1px solid #bbb; background: #f1ecec; line-height: 13px; }
.coords { width: 136px; margin-right: 3px; padding-left: 3px; border: 1px solid #ddd; border-color: #bbb #eee #eee #bbb; white-space: nowrap; }
.status > button { padding: 0 2px; border: 1px solid transparent; border-right-color: #ccc; white-space: nowrap; }
.status > .on { border-color: #444 #ddd #ddd #444; background: #f7f4f4; }
.status > .mono { font-family: "Liberation Mono", monospace; font-size: 8px; }
.tray { display: flex; align-items: center; gap: 2px; margin-left: auto; padding: 0 11px 0 1px; border: 1px solid #ccc; }
.tray svg { width: 14px; height: 14px; }

.watermark {
  position: absolute;
  right: 19px;
  bottom: 20px;
  width: 173px;
  height: 77px;
  display: flex;
  flex-direction: column;
  align-items: center;
  padding: 9px 4px 0 0;
  background: #fff;
}
.watermark strong { font-size: 32px; line-height: 38px; font-weight: 700; color: #0fc13b; }
.watermark span { font-size: 18px; line-height: 22px; color: #8d8d8d; }
.pointer { position: absolute; right: 62px; bottom: 6px; width: 14px; height: 14px; }
```
